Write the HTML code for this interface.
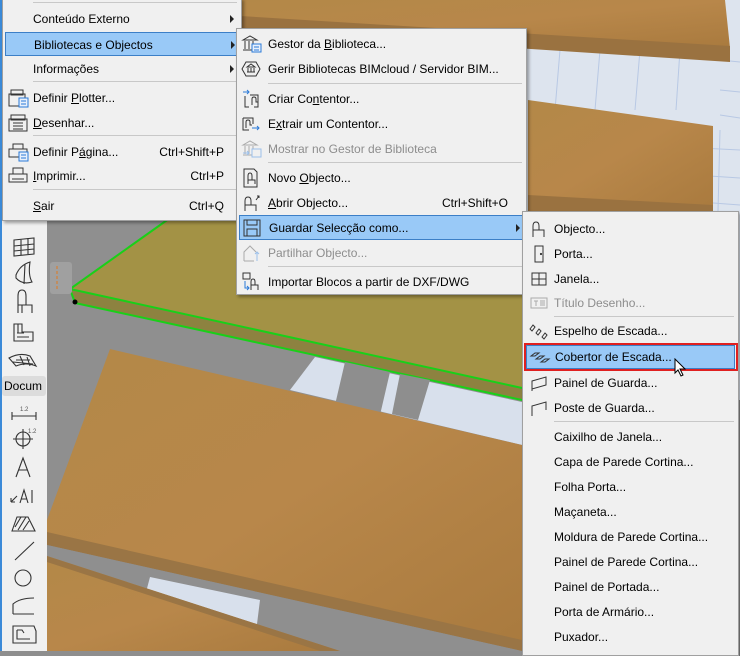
<!DOCTYPE html>
<html><head><meta charset="utf-8"><style>
*{margin:0;padding:0;box-sizing:border-box}
body{width:740px;height:651px;overflow:hidden;position:relative;background:#8e8e8e;font-family:"Segoe UI","Liberation Sans",sans-serif;font-size:12px;color:#000}
.m{position:absolute;background:#f0f0f0;border:1px solid #a0a0a0;box-shadow:2px 2px 3px rgba(0,0,0,.35)}
.i{position:absolute;left:0;right:0;height:24px;line-height:24px;white-space:nowrap}
.i .t{position:absolute}
.i .k{position:absolute}
.g{color:#8d8d8d}
.h{background:#99c9f7;border:1px solid #3c7fc7}
.s{position:absolute;height:1px;background:#c8c8c8}
.ar{position:absolute;width:0;height:0;border-top:4px solid transparent;border-bottom:4px solid transparent;border-left:4px solid #222;top:8px}
.ic{position:absolute;top:2px}
u{text-decoration:underline}
</style></head><body>
<svg width="740" height="651" style="position:absolute;left:0;top:0">
<defs>
<linearGradient id="w" x1="0" y1="0" x2="1" y2="1"><stop offset="0" stop-color="#b38848"/><stop offset=".5" stop-color="#b8874a"/><stop offset="1" stop-color="#a97a3e"/></linearGradient>
</defs>
<rect x="0" y="0" width="740" height="651" fill="#8f8f8f"/>
<!-- upper right floor -->
<polygon points="240,0 740,0 740,400 522,400 240,280" fill="#dde4ee"/>
<g stroke="#b8c8e4" stroke-width="1">
<line x1="540" y1="140" x2="740" y2="150"/><line x1="540" y1="165" x2="740" y2="178"/><line x1="540" y1="190" x2="740" y2="205"/>
<line x1="720" y1="60" x2="740" y2="62"/><line x1="720" y1="90" x2="740" y2="92"/><line x1="720" y1="115" x2="740" y2="118"/>
<line x1="560" y1="50" x2="555" y2="110"/><line x1="600" y1="50" x2="595" y2="110"/><line x1="640" y1="50" x2="635" y2="110"/><line x1="680" y1="50" x2="676" y2="110"/><line x1="720" y1="130" x2="718" y2="211"/>
</g>
<!-- top planks -->
<polygon points="240,0 725,0 730,48 240,18" fill="url(#w)"/>
<polygon points="240,16 730,46 730,62 240,30" fill="#9a7240"/>
<polygon points="528,100 713,126 713,210 528,210" fill="url(#w)"/>
<polygon points="528,195 713,205 713,212 528,212" fill="#9a7240"/>
<!-- olive plank -->
<polygon points="70,289 170,218 522,218 522,388" fill="#a39245"/>
<polygon points="70,289 522,388 522,400 75,303" fill="#8d8240"/>
<polyline points="170,218 70,289 522,388" fill="none" stroke="#19d019" stroke-width="2"/>
<polyline points="70,289 75,303 522,400" fill="none" stroke="#19d019" stroke-width="2"/>
<circle cx="75" cy="302" r="2.5" fill="#000"/>
<!-- light blue gaps -->
<polygon points="315,357 522,402 522,445 290,390" fill="#d8e0ec"/>
<polygon points="345,362 390,372 380,415 335,405" fill="#8e8e8e"/>
<polygon points="400,374 430,380 418,420 392,414" fill="#8e8e8e"/>
<!-- big plank -->
<polygon points="110,349 522,445 522,651 47,535 47,520 " fill="url(#w)"/>
<polygon points="47,532 522,640 522,651 47,545" fill="#9a7545"/>
<!-- bottom area -->
<polygon points="47,545 522,651 47,651" fill="#8f8f8f"/>
<polygon points="150,577 260,600 255,640 140,615" fill="#d8e0ec"/>
<polygon points="47,556 340,651 47,651" fill="url(#w)"/>
<polygon points="47,556 47,562 320,651 340,651" fill="#9a7545"/>
<rect x="50" y="262" width="22" height="32" rx="3" fill="#a0a0a0"/>
<line x1="57" y1="266" x2="57" y2="291" stroke="#e07a20" stroke-dasharray="3,2"/>
</svg>

<!-- left toolbar -->
<div style="position:absolute;left:0;top:0;width:2px;height:651px;background:#3b8ad8"></div>
<div style="position:absolute;left:2px;top:0;width:45px;height:651px;background:#f0f0f0"></div>
<div style="position:absolute;left:2px;top:376px;width:44px;height:20px;background:#dcdcdc;border-radius:3px;font-size:12px;line-height:20px;padding-left:2px;overflow:hidden">Docum</div>
<svg width="47" height="651" style="position:absolute;left:0;top:0" fill="none" stroke="#333" stroke-width="1.1">
<path d="M14,240 L34,238 L34,254 L14,256Z M14,246 L34,244 M14,251 L34,249 M21,239 L21,255 M28,238 L28,254"/>
<path d="M16,275 Q20,265 30,262 Q28,275 32,282 Q22,285 16,278Z M25,264 L24,284"/>
<path d="M18,313 L18,296 Q18,290 22,290 Q26,290 26,296 L26,305 L32,305 L32,313 M18,305 L26,305 M22,305 L22,313"/>
<path d="M14,324 L22,324 L22,332 L33,332 L33,341 L14,341Z M17,333 L24,333 M17,337 L29,337 M18,324 L18,333"/>
<path d="M9,358 Q20,352 30,356 L36,366 Q26,362 16,366Z M16,360 L30,360 M13,362 L33,364 M20,356 L24,365 M27,357 L30,366"/>
<path d="M12,416 L36,416 M12,412 L12,420 M36,412 L36,420"/>
<text x="20" y="411" font-size="6" fill="#555" stroke="none">1.2</text>
<circle cx="23" cy="439" r="7"/><path d="M13,439 L33,439 M23,429 L23,449"/>
<text x="28" y="433" font-size="6" fill="#555" stroke="none">1.2</text>
<path d="M16,477 L23,458 L30,477 M19,470 L27,470"/>
<path d="M11,502 L17,496 M11,502 L11,498 M11,502 L15,502 M20,503 L24,490 L28,503 M21,499 L27,499 M32,490 L32,503"/>
<path d="M12,531 L17,517 L28,517 L35,531Z M15,527 L21,517 M18,530 L26,517 M23,530 L29,521"/>
<path d="M15,560 L34,542"/>
<circle cx="23" cy="578" r="8"/>
<path d="M13,614 L13,604 Q20,598 34,598 M13,614 L34,614"/>
<path d="M13,626 L34,626 L36,631 L36,643 L13,643Z M17,630 L17,639 L30,639 M17,630 L22,630 L24,633"/>
</svg>

<!-- main menu -->
<div class="m" style="left:2px;top:-2px;width:240px;height:223px;border-top:none">
<div class="s" style="left:30px;right:4px;top:4px"></div>
<div class="i" style="top:9px"><span class="t" style="left:30px">Conteúdo Externo</span><span class="ar" style="left:227px"></span></div>
<div class="i h" style="top:34px;left:2px;right:0"><span class="t" style="left:28px">Bibliotecas e Objectos</span><span class="ar" style="left:225px"></span></div>
<div class="i" style="top:59px"><span class="t" style="left:30px">Informações</span><span class="ar" style="left:227px"></span></div>
<div class="s" style="left:30px;right:4px;top:83px"></div>
<div class="i" style="top:88px"><svg class="ic" style="left:5px" width="22" height="20" fill="none" stroke="#333"><rect x="3" y="2" width="12" height="5"/><rect x="1" y="6" width="16" height="12"/><rect x="11" y="10" width="9" height="9" fill="#e8f0fb" stroke="#2a7ad8"/><path d="M13,13 h5 M13,16 h5" stroke="#2a7ad8"/></svg><span class="t" style="left:30px">Definir <u>P</u>lotter...</span></div>
<div class="i" style="top:113px"><svg class="ic" style="left:5px" width="22" height="20" fill="none" stroke="#333"><rect x="3" y="2" width="14" height="5"/><rect x="1" y="6" width="18" height="12"/><path d="M5,10 h10 M5,13 h10 M5,16 h10"/></svg><span class="t" style="left:30px"><u>D</u>esenhar...</span></div>
<div class="s" style="left:30px;right:4px;top:137px"></div>
<div class="i" style="top:142px"><svg class="ic" style="left:5px" width="22" height="20" fill="none" stroke="#333"><rect x="5" y="2" width="10" height="5"/><rect x="1" y="7" width="18" height="8"/><rect x="11" y="10" width="9" height="9" fill="#e8f0fb" stroke="#2a7ad8"/><path d="M13,13 h5 M13,16 h5" stroke="#2a7ad8"/></svg><span class="t" style="left:30px">Definir P<u>á</u>gina...</span><span class="k" style="right:17px">Ctrl+Shift+P</span></div>
<div class="i" style="top:166px"><svg class="ic" style="left:5px" width="22" height="20" fill="none" stroke="#333"><rect x="5" y="2" width="10" height="6"/><rect x="1" y="8" width="18" height="8"/><path d="M4,13 h12"/></svg><span class="t" style="left:30px"><u>I</u>mprimir...</span><span class="k" style="right:17px">Ctrl+P</span></div>
<div class="s" style="left:30px;right:4px;top:191px"></div>
<div class="i" style="top:196px"><span class="t" style="left:30px"><u>S</u>air</span><span class="k" style="right:17px">Ctrl+Q</span></div>
</div>

<!-- submenu 1 -->
<div class="m" style="left:236px;top:28px;width:291px;height:267px">
<div class="i" style="top:3px"><svg class="ic" style="left:4px" width="22" height="20" fill="none" stroke="#333"><path d="M2,6 L9,2 L16,6 Z M2,16 h14 M4,7 v8 M8,7 v8 M12,7 v8"/><rect x="11" y="10" width="9" height="8" fill="#e8f0fb" stroke="#2a7ad8"/><path d="M13,13 h5 M13,16 h5" stroke="#2a7ad8"/></svg><span class="t" style="left:31px">Gestor da <u>B</u>iblioteca...</span></div>
<div class="i" style="top:28px"><svg class="ic" style="left:4px" width="22" height="20" fill="none" stroke="#333"><path d="M1,10 L5,3 L15,3 L19,10 L15,17 L5,17Z M6,8 L10,5 L14,8Z M6,13 h8 M7,9 v4 M10,9 v4 M13,9 v4"/></svg><span class="t" style="left:31px">Gerir Bibliotecas BIMcloud / Servidor BIM...</span></div>
<div class="s" style="left:31px;right:4px;top:54px"></div>
<div class="i" style="top:58px"><svg class="ic" style="left:4px" width="22" height="20" fill="none" stroke="#333"><path d="M2,3 h6 M6,1 l2,2 -2,2" stroke="#2a7ad8"/><path d="M4,7 v11 h4 M9,6 h8 v12 h-4 M11,16 v-6 q0-2 2-2 q2,0 2,2 v3 h2"/></svg><span class="t" style="left:31px">Criar Co<u>n</u>tentor...</span></div>
<div class="i" style="top:83px"><svg class="ic" style="left:4px" width="22" height="20" fill="none" stroke="#333"><path d="M2,4 h10 v6 M2,4 v12 h6 M5,14 v-6 q0-2 2-2 q2,0 2,2 v3 h2"/><path d="M11,14 h7 M16,12 l2,2 -2,2" stroke="#2a7ad8"/></svg><span class="t" style="left:31px">E<u>x</u>trair um Contentor...</span></div>
<div class="i g" style="top:108px"><svg class="ic" style="left:4px" width="22" height="20" fill="none" stroke="#aaa"><path d="M2,6 L9,2 L16,6 Z M2,16 h9 M4,7 v8 M8,7 v8 M12,7 v3"/><rect x="11" y="10" width="9" height="8" stroke="#9cc0ea"/><path d="M2,14 h6 M6,12 l2,2 -2,2" stroke="#9cc0ea"/></svg><span class="t" style="left:31px">Mostrar no Gestor de Biblioteca</span></div>
<div class="s" style="left:31px;right:4px;top:133px"></div>
<div class="i" style="top:137px"><svg class="ic" style="left:4px" width="22" height="20" fill="none" stroke="#333"><path d="M3,1 h10 l3,3 v15 h-13Z M7,16 v-8 q0-3 2-3 q2,0 2,3 v4 h3 v4 M7,12 h7"/></svg><span class="t" style="left:31px">Novo <u>O</u>bjecto...</span></div>
<div class="i" style="top:162px"><svg class="ic" style="left:4px" width="22" height="20" fill="none" stroke="#333"><path d="M4,18 v-10 q0-4 3-4 q3,0 3,4 v4 h5 v6 M4,12 h10 M15,7 l3,-4 M16,3 h2 v2"/></svg><span class="t" style="left:31px"><u>A</u>brir Objecto...</span><span class="k" style="right:18px">Ctrl+Shift+O</span></div>
<div class="i h" style="top:186px;left:2px;right:0;height:25px"><svg class="ic" style="left:2px" width="22" height="20" fill="none" stroke="#333"><rect x="2" y="2" width="16" height="16"/><rect x="5" y="2" width="10" height="5"/><rect x="5" y="11" width="10" height="7"/></svg><span class="t" style="left:29px">Guardar Selecção como...</span><span class="ar" style="left:276px"></span></div>
<div class="i g" style="top:212px"><svg class="ic" style="left:4px" width="22" height="20" fill="none" stroke="#aaa"><path d="M3,18 v-9 l6,-6 6,6 M3,18 h10"/><path d="M16,18 v-9 M14,11 l2,-2 2,2" stroke="#9cc0ea"/></svg><span class="t" style="left:31px">Partilhar Objecto...</span></div>
<div class="s" style="left:31px;right:4px;top:237px"></div>
<div class="i" style="top:241px"><svg class="ic" style="left:4px" width="22" height="20" fill="none" stroke="#333"><rect x="2" y="1" width="7" height="6"/><path d="M10,18 v-8 q0-3 2-3 q2,0 2,3 v3 h3 v5 M10,13 h7"/><path d="M4,9 v7 h4 M6,14 l2,2 -2,2" stroke="#2a7ad8"/></svg><span class="t" style="left:31px">Importar Blocos a partir de DXF/DWG</span></div>
</div>

<!-- submenu 2 -->
<div class="m" style="left:522px;top:211px;width:217px;height:445px">
<div class="i" style="top:5px"><svg class="ic" style="left:7px" width="20" height="20" fill="none" stroke="#333"><path d="M3,18 v-11 q0-4 3-4 q3,0 3,4 v4 h5 v7 M3,11 h11"/></svg><span class="t" style="left:31px">Objecto...</span></div>
<div class="i" style="top:30px"><svg class="ic" style="left:7px" width="20" height="20" fill="none" stroke="#333"><path d="M5,2 h8 v16 h-8Z"/><circle cx="11" cy="10" r=".6" fill="#333"/></svg><span class="t" style="left:31px">Porta...</span></div>
<div class="i" style="top:55px"><svg class="ic" style="left:7px" width="20" height="20" fill="none" stroke="#333"><path d="M2,4 h14 v12 h-14Z M9,4 v12 M2,10 h14"/></svg><span class="t" style="left:31px">Janela...</span></div>
<div class="i g" style="top:79px"><svg class="ic" style="left:7px" width="20" height="20" fill="none" stroke="#aaa"><rect x="1" y="5" width="16" height="10"/><path d="M4,8 h4 M6,8 v5 M10,8 h5 M10,10 h5 M10,12 h5"/></svg><span class="t" style="left:31px">Título Desenho...</span></div>
<div class="s" style="left:31px;right:4px;top:104px"></div>
<div class="i" style="top:107px"><svg class="ic" style="left:5px" width="22" height="20" fill="none" stroke="#333"><path d="M2,8 l3,-4 l2,2 l-3,4Z M8,12 l3,-4 l2,2 l-3,4Z M14,16 l3,-4 l2,2 l-3,4Z"/></svg><span class="t" style="left:31px">Espelho de Escada...</span></div>
<div style="position:absolute;left:1px;top:131px;width:214px;height:28px;border:2px solid #e02020"></div>
<div class="i" style="top:133px;left:3px;right:3px;height:24px;background:#99c9f7;border:1px solid #3c7fc7"><svg class="ic" style="left:2px;top:1px" width="22" height="20" fill="none" stroke="#333"><path d="M2,9 l4,-3 h4 l-4,3Z M7,12 l4,-3 h4 l-4,3Z M12,15 l4,-3 h4 l-4,3Z"/></svg><span class="t" style="left:28px;top:-1px">Cobertor de Escada...</span></div>
<svg style="position:absolute;left:151px;top:146px" width="14" height="20"><path d="M1,1 L1,15 L4,12 L7,18 L9,17 L6,11 L11,11Z" fill="#fff" stroke="#000" stroke-width="1"/></svg>
<div class="i" style="top:159px"><svg class="ic" style="left:7px" width="20" height="20" fill="none" stroke="#333"><path d="M2,8 L16,4 v8 L2,16Z"/><path d="M2,8 v10"/></svg><span class="t" style="left:31px">Painel de Guarda...</span></div>
<div class="i" style="top:184px"><svg class="ic" style="left:7px" width="20" height="20" fill="none" stroke="#333"><path d="M2,18 v-10 L16,4 v8"/></svg><span class="t" style="left:31px">Poste de Guarda...</span></div>
<div class="s" style="left:31px;right:4px;top:209px"></div>
<div class="i" style="top:213px"><span class="t" style="left:31px">Caixilho de Janela...</span></div>
<div class="i" style="top:238px"><span class="t" style="left:31px">Capa de Parede Cortina...</span></div>
<div class="i" style="top:263px"><span class="t" style="left:31px">Folha Porta...</span></div>
<div class="i" style="top:288px"><span class="t" style="left:31px">Maçaneta...</span></div>
<div class="i" style="top:313px"><span class="t" style="left:31px">Moldura de Parede Cortina...</span></div>
<div class="i" style="top:338px"><span class="t" style="left:31px">Painel de Parede Cortina...</span></div>
<div class="i" style="top:363px"><span class="t" style="left:31px">Painel de Portada...</span></div>
<div class="i" style="top:388px"><span class="t" style="left:31px">Porta de Armário...</span></div>
<div class="i" style="top:413px"><span class="t" style="left:31px">Puxador...</span></div>
</div>
</body></html>
